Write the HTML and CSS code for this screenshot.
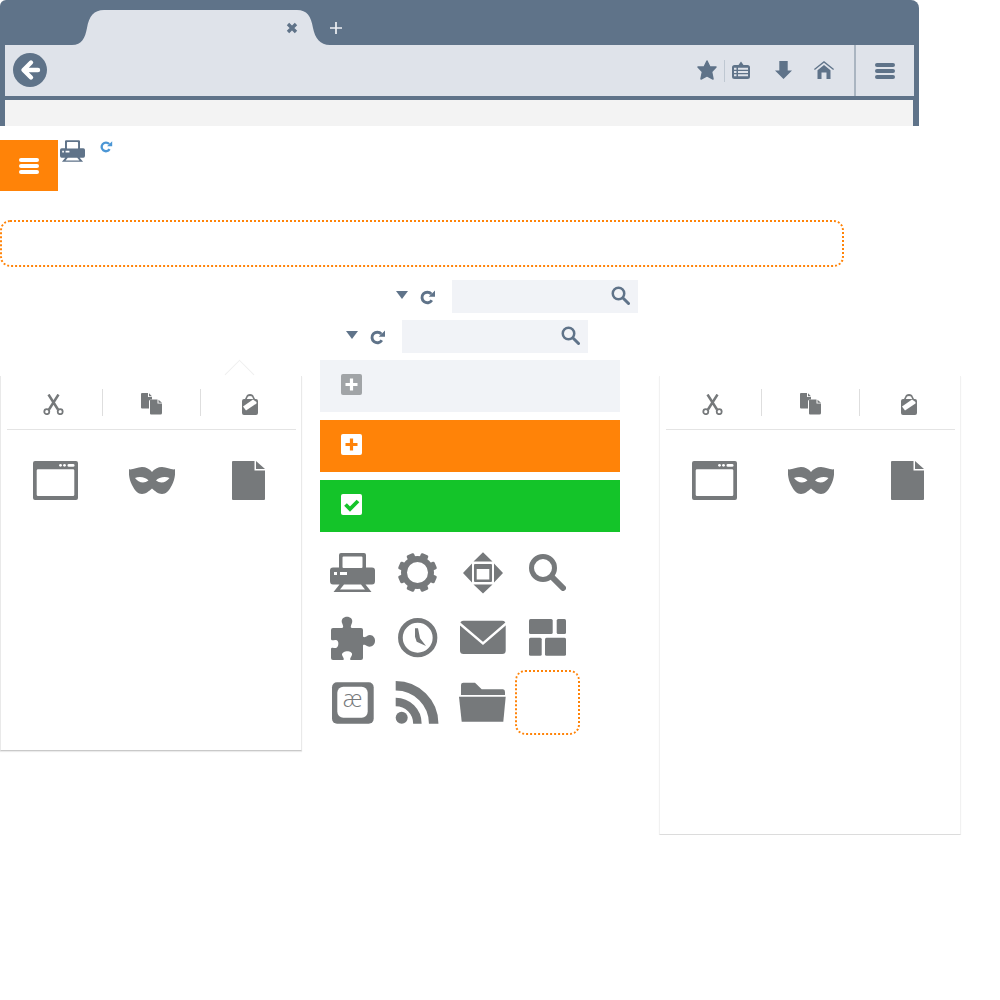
FILE: index.html
```html
<!DOCTYPE html>
<html lang="en">
<head>
    <meta charset="UTF-8">
    <meta name="viewport" content="width=device-width, initial-scale=1.0">
    <title>Browser theme sprites</title>
    <link rel="stylesheet" href="styles.css">
</head>
<body>
    <svg class="defs" xmlns="http://www.w3.org/2000/svg">
        <symbol id="i-menu" viewBox="0 0 20 16">
            <rect width="20" height="4" y="0" rx="2" fill="currentColor"/>
            <rect width="20" height="4" y="6" rx="2" fill="currentColor"/>
            <rect width="20" height="4" y="12" rx="2" fill="currentColor"/>
        </symbol>
        <symbol id="i-printer" viewBox="10 13 45 39">
            <path fill="currentColor" fill-rule="evenodd" d="M21 13H44Q46 13 46 15V27.500H52Q55 27.500 55 30.500V41Q55 44.500 52 44.500H45.500L51.500 52H13.500L19.500 44.500H13Q10 44.500 10 41V30.500Q10 27.500 13 27.500H19V15Q19 13 21 13ZM23.500 16.500Q22.500 16.500 22.500 17.500V27Q22.500 28 23.500 28H41.500Q42.500 28 42.500 27V17.500Q42.500 16.500 41.500 16.500ZM14 32V35H17V32ZM20 32V35H27V32ZM24 44.500L20 49.500H45L41 44.500Z"/>
        </symbol>
        <symbol id="i-reload" viewBox="0 0 16 16">
            <path d="M11.300 5A5.300 5.300 0 1 0 11.800 11.300" fill="none" stroke="currentColor" stroke-width="2.900"/>
            <path d="M15 1.500V7.800H8.700Z" fill="currentColor"/>
        </symbol>
        <symbol id="i-search" viewBox="0 0 38 38">
            <circle cx="15" cy="15" r="11.500" fill="none" stroke="currentColor" stroke-width="5"/>
            <path d="M25 25L35 35" fill="none" stroke="currentColor" stroke-width="6" stroke-linecap="round"/>
        </symbol>
        <symbol id="i-scissors" viewBox="0 0 21 21">
            <path d="M5.500 0.500L15 15.500M15.500 0.500L6 15.500" fill="none" stroke="currentColor" stroke-width="2.500"/>
            <circle cx="3.800" cy="17.700" r="2.500" fill="none" stroke="currentColor" stroke-width="1.800"/>
            <circle cx="17.200" cy="17.700" r="2.500" fill="none" stroke="currentColor" stroke-width="1.800"/>
        </symbol>
        <symbol id="i-copy" viewBox="0 0 21 22">
            <path fill="currentColor" d="M1 0H7V4H11L11 6.500H10Q8 6.500 8 8.500V15.500H1Q0 15.500 0 14.500V1Q0 0 1 0ZM8 0.300L11 3.300H8Z"/>
            <path fill="currentColor" d="M10 6.500H16.500V10.500H21V20Q21 21.500 19.500 21.500H10Q9 21.500 9 20.500V7.500Q9 6.500 10 6.500ZM17.500 6.800L21 9.800H17.500Z"/>
        </symbol>
        <symbol id="i-paste" viewBox="0 0 16 21">
            <path fill="currentColor" fill-rule="evenodd" d="M5 1Q8 -1 11 1L13 5H14Q16 5 16 7V19Q16 21 14 21H2Q0 21 0 19V7Q0 5 2 5H3ZM6 2.500L4.800 5H11.200L10 2.500Q8 1.500 6 2.500Z"/>
            <path fill="#fff" d="M1 12.500L11 5.500L14.500 8V9.500L4 16.500Z"/>
        </symbol>
        <symbol id="i-window" viewBox="0 0 45 39">
            <path fill="currentColor" fill-rule="evenodd" d="M2 0H43Q45 0 45 2V37Q45 39 43 39H2Q0 39 0 37V2Q0 0 2 0ZM5 8.300Q3.700 8.300 3.700 9.600V33.700Q3.700 35 5 35H40Q41.300 35 41.300 33.700V9.600Q41.300 8.300 40 8.300Z"/>
            <circle cx="27.500" cy="4.300" r="1.400" fill="#fff"/>
            <circle cx="31.500" cy="4.300" r="1.400" fill="#fff"/>
            <rect x="34.500" y="3" width="7" height="2.700" rx="1.300" fill="#fff"/>
        </symbol>
        <symbol id="i-mask" viewBox="0 0 46 27">
            <path fill="currentColor" fill-rule="evenodd" d="M0 2.300C4 3 8 0 13 0C17 0 21 2 23 5C25 2 29 0 33 0C38 0 42 3 46 2.300C46.500 8 45.500 13 43 18C40 24 37 27 33 27C29 27 26 24 23 21.500C20 24 17 27 13 27C9 27 6 24 3 18C0.500 13 -0.500 8 0 2.300ZM6 11C9 15.500 15 17 19.500 13.500C17 10 10 9 6 11ZM40.500 11C36.500 9 29.500 10 27 13.500C31.500 17 37.500 15.500 40.500 11Z"/>
        </symbol>
        <symbol id="i-file" viewBox="0 0 33 39">
            <path fill="currentColor" d="M1 0H22.500V9.500H33V38Q33 39 32 39H1Q0 39 0 38V1Q0 0 1 0ZM24 0L33 8H24Z"/>
        </symbol>
    </svg>

    <header class="browser">
        <div class="tabbar">
            <svg class="tab" width="260" height="35" viewBox="0 0 260 35">
                <path class="tab-shape" d="M0 35H2C12 35 15 28 17 18C19 6 24 0 34 0H227C237 0 241 6 243 18C245 28 250 35 260 35Z"/>
                <path class="tab-close" d="M218 14L226 22M226 14L218 22"/>
            </svg>
            <svg class="tab-new" width="12" height="12" viewBox="0 0 12 12">
                <path d="M6 0V12M0 6H12"/>
            </svg>
        </div>
        <div class="toolbar">
            <svg class="back" width="34" height="34" viewBox="0 0 34 34">
                <circle cx="17" cy="17" r="17"/>
                <path d="M25 17H11M18 9.500L10.500 17L18 24.500"/>
            </svg>
            <div class="toolbar-right">
                <svg class="tb-star" width="20" height="20" viewBox="0 0 20 20">
                    <path d="M10 1L12.900 7H19L14.600 11.800L16 19L10 15.800L4 19L5.400 11.800L1 7H7.100Z" stroke="#5f7389" stroke-width="1.500" stroke-linejoin="round"/>
                </svg>
                <span class="tb-sep"></span>
                <svg class="tb-list" width="18" height="18" viewBox="0 0 18 18" fill-rule="evenodd">
                    <path d="M2.500 4H6.500L9 0.500L11.500 4H15.500Q18 4 18 6.500V15.500Q18 18 15.500 18H2.500Q0 18 0 15.500V6.500Q0 4 2.500 4ZM2 6.800V8.800H4.500V6.800ZM6 6.800V8.800H16V6.800ZM2 10V12H4.500V10ZM6 10V12H16V10ZM2 13.300V15.300H4.500V13.300ZM6 13.300V15.300H16V13.300Z"/>
                </svg>
                <svg class="tb-down" width="17" height="18" viewBox="0 0 17 18">
                    <path d="M4.300 0H12.700V9.500H17L8.500 18L0 9.500H4.300Z"/>
                </svg>
                <svg class="tb-home" width="20" height="18" viewBox="0 0 20 18">
                    <path d="M10 0L20 8L19.200 9L10 1.800L0.800 9L0 8Z"/>
                    <path d="M10 4L16.500 9.300V18H12.500V11.500H7.500V18H3.500V9.300Z"/>
                </svg>
                <span class="tb-divider"></span>
                <svg class="tb-menu" width="20" height="16"><use href="#i-menu"/></svg>
            </div>
        </div>
        <div class="page-area"></div>
    </header>

    <div class="nav-row">
        <div class="nav-button">
            <svg width="20" height="16"><use href="#i-menu"/></svg>
        </div>
        <svg class="nav-print" width="25" height="22"><use href="#i-printer"/></svg>
        <svg class="nav-reload" width="13" height="13"><use href="#i-reload"/></svg>
    </div>

    <div class="dotted-bar"></div>

    <div class="search-row search-row-wide">
        <span class="caret"></span>
        <svg class="row-reload" width="16" height="16"><use href="#i-reload"/></svg>
        <div class="search-box"><svg width="19" height="19"><use href="#i-search"/></svg></div>
    </div>
    <div class="search-row search-row-narrow">
        <span class="caret"></span>
        <svg class="row-reload" width="16" height="16"><use href="#i-reload"/></svg>
        <div class="search-box"><svg width="19" height="19"><use href="#i-search"/></svg></div>
    </div>

    <main class="columns">
        <section class="panel panel-left">
            <span class="panel-arrow"></span>
            <div class="panel-tools">
                <div class="tool"><svg width="21" height="21"><use href="#i-scissors"/></svg></div>
                <div class="tool"><svg width="21" height="22"><use href="#i-copy"/></svg></div>
                <div class="tool"><svg width="16" height="21"><use href="#i-paste"/></svg></div>
            </div>
            <div class="panel-grid">
                <svg width="45" height="39"><use href="#i-window"/></svg>
                <svg width="46" height="27"><use href="#i-mask"/></svg>
                <svg width="33" height="39"><use href="#i-file"/></svg>
            </div>
        </section>

        <section class="middle">
            <div class="bar bar-grey">
                <svg width="21" height="21" viewBox="0 0 21 21"><rect class="box" width="21" height="21" rx="2"/><path class="mark" d="M10.500 4.500V16.500M4.500 10.500H16.500"/></svg>
            </div>
            <div class="bar bar-orange">
                <svg width="21" height="21" viewBox="0 0 21 21"><rect class="box" width="21" height="21" rx="2"/><path class="mark" d="M10.500 4.500V16.500M4.500 10.500H16.500"/></svg>
            </div>
            <div class="bar bar-green">
                <svg width="21" height="21" viewBox="0 0 21 21"><rect class="box" width="21" height="21" rx="2"/><path class="mark mark-check" d="M4.500 10.500L9 15L17 7"/></svg>
            </div>
            <div class="icon-grid">
                <svg class="cell" viewBox="0 0 65 65"><use href="#i-printer" x="10" y="13" width="45" height="39"/></svg>
                <svg class="cell" viewBox="0 0 65 65">
                    <circle cx="32.500" cy="32.500" r="13.500" fill="none" stroke="currentColor" stroke-width="6"/>
                    <g fill="currentColor">
                        <rect x="28.500" y="12.800" width="8" height="8" rx="1.500" transform="rotate(22.500 32.500 32.500)"/>
                        <rect x="28.500" y="12.800" width="8" height="8" rx="1.500" transform="rotate(67.500 32.500 32.500)"/>
                        <rect x="28.500" y="12.800" width="8" height="8" rx="1.500" transform="rotate(112.500 32.500 32.500)"/>
                        <rect x="28.500" y="12.800" width="8" height="8" rx="1.500" transform="rotate(157.500 32.500 32.500)"/>
                        <rect x="28.500" y="12.800" width="8" height="8" rx="1.500" transform="rotate(202.500 32.500 32.500)"/>
                        <rect x="28.500" y="12.800" width="8" height="8" rx="1.500" transform="rotate(247.500 32.500 32.500)"/>
                        <rect x="28.500" y="12.800" width="8" height="8" rx="1.500" transform="rotate(292.500 32.500 32.500)"/>
                        <rect x="28.500" y="12.800" width="8" height="8" rx="1.500" transform="rotate(337.500 32.500 32.500)"/>
                    </g>
                </svg>
                <svg class="cell" viewBox="0 0 65 65" fill="currentColor" fill-rule="evenodd">
                    <path d="M33 12.300L42.500 21.500H23.500ZM33 53.500L23.500 44.500H42.500ZM13 33L22 23.500V42.500ZM53 33L44 23.500V42.500Z"/>
                    <path d="M25 24H41Q42 24 42 25V41Q42 42 41 42H25Q24 42 24 41V25Q24 24 25 24ZM26.700 29V39.500H39.300V29Z"/>
                </svg>
                <svg class="cell" viewBox="0 0 65 65"><use href="#i-search" x="13" y="13" width="38" height="38"/></svg>

                <svg class="cell" viewBox="0 0 65 65">
                    <path fill="currentColor" d="M13 23H22C24 23 23 20 22 18C19.500 9.500 34.500 9.500 32 18C31 20 30 23 32 23H41Q43 23 43 25V31C43 33 46 32 47 31C51 28 55.500 32 55 36C55 40 51 43 47 41C45 40 43 39 43 41V53Q43 55 41 55H31C29 55 31 52 32 50C33 45 22 45 22 50C23 52 25 55 23 55H13Q11 55 11 53V44C11 42 14 43 15 43C19 44 20 34 15 35C14 35 11 36 11 34V25Q11 23 13 23Z"/>
                </svg>
                <svg class="cell" viewBox="0 0 65 65">
                    <circle cx="32.700" cy="32.700" r="17.300" fill="none" stroke="currentColor" stroke-width="4.700"/>
                    <path fill="currentColor" d="M30 23.300H33L35 33.300L41 41L31.700 36.700L30 31.700Z"/>
                </svg>
                <svg class="cell" viewBox="0 0 65 65">
                    <rect x="10" y="15.700" width="45.700" height="33.300" rx="3.500" fill="currentColor"/>
                    <path d="M9 18L33 38.300L56.700 18" fill="none" stroke="#fff" stroke-width="2.400"/>
                </svg>
                <svg class="cell" viewBox="0 0 65 65" fill="currentColor">
                    <rect x="14" y="14" width="23.700" height="15" rx="1.500"/>
                    <rect x="41.700" y="14" width="9.300" height="15" rx="1.500"/>
                    <rect x="14" y="32.700" width="12.700" height="18" rx="1.500"/>
                    <rect x="30" y="32.700" width="21" height="18" rx="1.500"/>
                </svg>

                <svg class="cell" viewBox="0 0 65 65">
                    <rect x="12" y="12.300" width="41.700" height="41.400" rx="5" fill="currentColor"/>
                    <rect x="17.300" y="16.700" width="30.400" height="31" rx="6" fill="#fff"/>
                    <text class="ae" x="32.500" y="37" text-anchor="middle">æ</text>
                </svg>
                <svg class="cell" viewBox="0 0 65 65">
                    <circle cx="16.700" cy="47.700" r="6" fill="currentColor"/>
                    <path d="M10.700 32A21.700 21.700 0 0 1 32.400 53.700" fill="none" stroke="currentColor" stroke-width="8.500"/>
                    <path d="M10.700 15.700A38 38 0 0 1 48.700 53.700" fill="none" stroke="currentColor" stroke-width="9.500"/>
                </svg>
                <svg class="cell" viewBox="0 0 65 65" fill="currentColor">
                    <path d="M11 25V15Q11 12.700 13.300 12.700H25L31.700 19.300H53Q55 19.300 55 22V25Z"/>
                    <path d="M9 26.700H55.700L53.300 51.700H11.700Z"/>
                </svg>
                <div class="cell cell-dotted"></div>
            </div>
        </section>

        <section class="panel panel-right">
            <div class="panel-tools">
                <div class="tool"><svg width="21" height="21"><use href="#i-scissors"/></svg></div>
                <div class="tool"><svg width="21" height="22"><use href="#i-copy"/></svg></div>
                <div class="tool"><svg width="16" height="21"><use href="#i-paste"/></svg></div>
            </div>
            <div class="panel-grid">
                <svg width="45" height="39"><use href="#i-window"/></svg>
                <svg width="46" height="27"><use href="#i-mask"/></svg>
                <svg width="33" height="39"><use href="#i-file"/></svg>
            </div>
        </section>
    </main>
</body>
</html>
```

FILE: styles.css
```css
body {
    margin: 0;
    background: #fff;
    font-family: 'Liberation Sans', sans-serif;
}
svg {
    display: block;
}
.defs {
    display: none;
}

/* browser frame */
.browser {
    width: 909px;
    padding: 0 5px;
    background: #5f7389;
    border-radius: 6px 8px 0 0;
}
.tabbar {
    display: flex;
    align-items: flex-end;
    height: 45px;
    padding-left: 65px;
}
.tab-shape {
    fill: #dfe3ea;
}
.tab-close {
    fill: none;
    stroke: #5f7389;
    stroke-width: 3.4;
}
.tab-new {
    margin-bottom: 11px;
}
.tab-new path {
    fill: none;
    stroke: #eef0f4;
    stroke-width: 1.7;
}
.toolbar {
    display: flex;
    align-items: center;
    height: 51px;
    padding-left: 8px;
    background: #dfe3ea;
}
.back {
    margin-bottom: 1px;
}
.back circle {
    fill: #5f7389;
}
.back path {
    fill: none;
    stroke: #fff;
    stroke-width: 4.4;
    stroke-linecap: round;
    stroke-linejoin: round;
}
.toolbar-right {
    display: flex;
    align-items: center;
    height: 51px;
    margin-left: auto;
    padding-right: 19px;
    color: #5f7389;
    fill: #5f7389;
}
.tb-star {
    margin: 0 7px 1px 0;
}
.tb-sep {
    width: 1px;
    height: 22px;
    margin-right: 7px;
    background: #bfc8d2;
}
.tb-list {
    margin: 0 25px 1px 0;
}
.tb-down {
    margin: 0 22px 1px 0;
}
.tb-home {
    margin: 0 20px 1px 0;
}
.tb-divider {
    width: 2px;
    height: 51px;
    margin-right: 19px;
    background: #aab5c1;
}
.tb-menu {
    margin-top: 1px;
}
.page-area {
    height: 26px;
    margin: 4px 1px 0 0;
    background: #f3f3f3;
}

/* orange nav */
.nav-row {
    display: flex;
    align-items: flex-start;
    margin-top: 14px;
}
.nav-button {
    display: flex;
    align-items: center;
    justify-content: center;
    width: 58px;
    height: 51px;
    padding-top: 1px;
    box-sizing: border-box;
    background: #ff8308;
    color: #fff;
}
.nav-print {
    margin-left: 2px;
    color: #5f7389;
}
.nav-reload {
    margin-left: 15px;
    color: #4b96d5;
}
.dotted-bar {
    box-sizing: border-box;
    width: 844px;
    height: 47px;
    margin-top: 29px;
    border: 2px dotted #ff8308;
    border-radius: 10px;
}

/* search rows */
.search-row {
    display: flex;
    align-items: center;
    justify-content: flex-end;
    height: 33px;
    color: #5f7389;
}
.search-row-wide {
    width: 638px;
    margin-top: 13px;
}
.search-row-narrow {
    width: 588px;
    margin-top: 7px;
}
.caret {
    width: 0;
    height: 0;
    margin: 0 12px 3px 0;
    border-style: solid;
    border-width: 8px 6px 0;
    border-color: #5f7389 transparent transparent;
}
.row-reload {
    margin: 1px 16px 0 0;
}
.search-box {
    display: flex;
    align-items: center;
    justify-content: flex-end;
    box-sizing: border-box;
    width: 186px;
    height: 33px;
    padding: 0 8px 2px 0;
    background: #f1f3f7;
}

/* lower columns */
.columns {
    display: flex;
    align-items: flex-start;
    margin-top: 7px;
    color: #76797b;
}
.panel {
    position: relative;
    box-sizing: border-box;
    width: 302px;
    margin-top: 16px;
    padding: 0 5px 0 6px;
    background: #fff;
}
.panel-left {
    height: 375px;
    border: 1px solid #e9e9e9;
    border-top: none;
    border-bottom-color: #c9c9c9;
    box-shadow: 0 1px 1px rgba(0, 0, 0, 0.08);
}
.panel-right {
    height: 459px;
    margin-left: 39px;
    border: 1px solid #f1f1f1;
    border-top: none;
    border-bottom-color: #dcdcdc;
    box-shadow: 0 1px 1px rgba(0, 0, 0, 0.05);
}
.panel-arrow {
    position: absolute;
    top: -12px;
    left: 228px;
    width: 20px;
    height: 20px;
    border-top: 1px solid #efefef;
    border-left: 1px solid #efefef;
    transform: rotate(45deg);
}
.panel-tools {
    display: flex;
    align-items: center;
    height: 53px;
    border-bottom: 1px solid #e4e4e4;
}
.tool {
    display: flex;
    align-items: center;
    justify-content: center;
    flex: 0 0 98px;
    box-sizing: border-box;
    height: 27px;
    padding-top: 3px;
    border-left: 1px solid #dedede;
}
.tool:first-child {
    flex-basis: 95px;
    border-left: none;
    padding-right: 2px;
}
.tool:last-child {
    flex-basis: 96px;
    padding-left: 2px;
}
.panel-grid {
    display: grid;
    grid-template-columns: 97px 96px 97px;
    align-items: center;
    justify-items: center;
    margin-top: 31px;
}
.middle {
    width: 300px;
    margin-left: 18px;
}
.bar {
    display: flex;
    align-items: center;
    box-sizing: border-box;
    height: 52px;
    margin-bottom: 8px;
    padding: 0 0 3px 21px;
}
.mark {
    fill: none;
    stroke-width: 3.2;
}
.mark-check {
    stroke-width: 3.8;
}
.bar-grey {
    background: #f1f3f7;
}
.bar-grey .box {
    fill: #a1a4a7;
}
.bar-grey .mark {
    stroke: #fff;
}
.bar-orange {
    background: #ff8308;
}
.bar-orange .box,
.bar-green .box {
    fill: #fff;
}
.bar-orange .mark {
    stroke: #ff8308;
}
.bar-green {
    background: #14c429;
}
.bar-green .mark {
    stroke: #14c429;
}
.icon-grid {
    display: grid;
    grid-template-columns: repeat(4, 65px);
    grid-auto-rows: 65px;
}
.cell {
    width: 65px;
    height: 65px;
}
.cell-dotted {
    box-sizing: border-box;
    border: 2px dotted #ff8308;
    border-radius: 10px;
}
.ae {
    fill: #76797b;
    font-family: 'Open Sans', sans-serif;
    font-size: 23px;
    font-weight: 300;
}
```
